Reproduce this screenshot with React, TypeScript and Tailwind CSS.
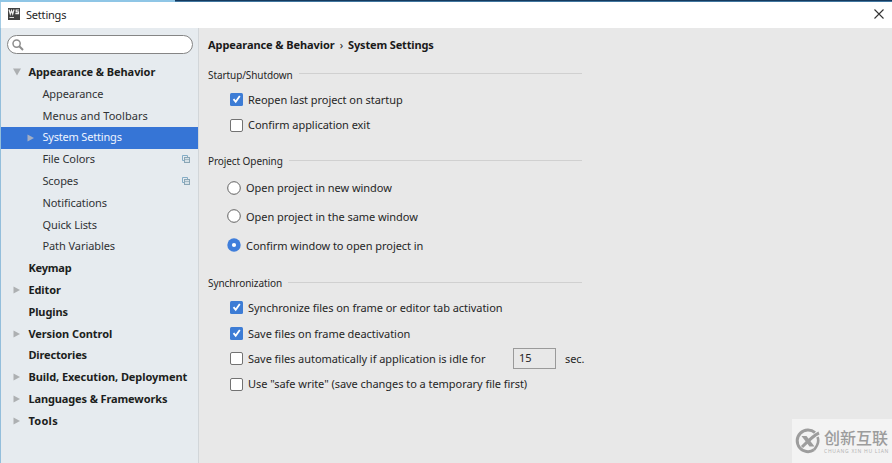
import React from "react";

type TreeItem = {
  label: string;
  level: 0 | 1;
  arrow?: "open" | "closed";
  selected?: boolean;
  shared?: boolean;
  tracking?: string;
};

const tree: TreeItem[] = [
  { label: "Appearance & Behavior", level: 0, arrow: "open" },
  { label: "Appearance", level: 1 },
  { label: "Menus and Toolbars", level: 1, tracking: "tracking-[0.04px]" },
  { label: "System Settings", level: 1, arrow: "closed", selected: true, tracking: "tracking-[-0.18px]" },
  { label: "File Colors", level: 1, shared: true },
  { label: "Scopes", level: 1, shared: true },
  { label: "Notifications", level: 1 },
  { label: "Quick Lists", level: 1 },
  { label: "Path Variables", level: 1 },
  { label: "Keymap", level: 0, tracking: "tracking-[-0.2px]" },
  { label: "Editor", level: 0, arrow: "closed" },
  { label: "Plugins", level: 0 },
  { label: "Version Control", level: 0, arrow: "closed" },
  { label: "Directories", level: 0, tracking: "tracking-[-0.15px]" },
  { label: "Build, Execution, Deployment", level: 0, arrow: "closed" },
  { label: "Languages & Frameworks", level: 0, arrow: "closed", tracking: "tracking-[-0.12px]" },
  { label: "Tools", level: 0, arrow: "closed", tracking: "tracking-[0.3px]" },
];

function Arrow({ kind, selected }: { kind?: "open" | "closed"; selected?: boolean }) {
  return (
    <svg className="mb-[1px] h-[8px] w-[8px] shrink-0" viewBox="0 0 8 8">
      {kind && (
        <path
          d={kind === "open" ? "M0 0.5H8L4 7.5Z" : "M0.5 0.5L7 4L0.5 7.5Z"}
          fill={selected ? "#a3aec4" : "#adb0b2"}
        />
      )}
    </svg>
  );
}

function SharedIcon() {
  return (
    <svg className="h-[8px] w-[8px]" viewBox="0 0 8 8" fill="none" strokeWidth="1">
      <path d="M2 5.5H0.5V0.5H5.5V2" stroke="#84adc6" />
      <rect x="2.5" y="2.5" width="5" height="5" fill="#d6e1e7" stroke="#8aa6b6" />
      <path d="M3 4.5H7" stroke="#a5bac5" />
    </svg>
  );
}

function TreeRow({ item }: { item: TreeItem }) {
  return (
    <div
      className={`flex h-[21.8px] items-center ${item.level ? "pl-[26px]" : "pl-[12px]"} ${
        item.selected ? "bg-[#3675d6] text-[#eef4ff]" : item.level ? "text-[#303234]" : "text-[#1c1e20]"
      }`}
    >
      <Arrow kind={item.arrow} selected={item.selected} />
      <span
        className={`ml-[7.4px] pb-[0.8px] whitespace-nowrap ${item.level ? "" : "font-bold"} ${
          item.tracking ?? "tracking-[-0.07px]"
        }`}
      >
        {item.label}
      </span>
      {item.shared && (
        <span className="mr-[8px] mb-[2px] ml-auto">
          <SharedIcon />
        </span>
      )}
    </div>
  );
}

function Section({ title, children }: { title: string; children: React.ReactNode }) {
  return (
    <section className="w-[374px]">
      <div className="flex h-[16px] items-center">
        <h2 className="text-[10px] tracking-[-0.08px] whitespace-nowrap">{title}</h2>
        <div className="mb-[3px] ml-[6px] h-px flex-1 bg-[#d0d0d0]" />
      </div>
      {children}
    </section>
  );
}

function Check({ checked, label }: { checked?: boolean; label: string }) {
  return (
    <div className="flex h-[25.4px] items-center pl-[22px]">
      <svg className="h-[13px] w-[13px] shrink-0" viewBox="0 0 13 13">
        {checked ? (
          <>
            <rect width="13" height="13" rx="1.5" fill="#3d7cd5" />
            <path d="M3.5 6.2L5.7 8.7L9.8 3" stroke="#fff" strokeWidth="1.8" fill="none" />
          </>
        ) : (
          <rect x="0.5" y="0.5" width="12" height="12" rx="1.5" fill="#fff" stroke="#727272" />
        )}
      </svg>
      <span className="ml-[5px] pt-[1.2px] tracking-[-0.05px] whitespace-nowrap">{label}</span>
    </div>
  );
}

function Radio({ checked, label }: { checked?: boolean; label: string }) {
  return (
    <div className="flex h-[28.8px] items-center pl-[19px]">
      <svg className="h-[14px] w-[14px] shrink-0" viewBox="0 0 14 14">
        {checked ? (
          <>
            <circle cx="7" cy="7" r="6.7" fill="#3f7edb" />
            <circle cx="7" cy="7" r="2.1" fill="#fff" />
          </>
        ) : (
          <circle cx="7" cy="7" r="6.3" fill="#fff" stroke="#626262" />
        )}
      </svg>
      <span className="ml-[5px] pt-[1.2px] tracking-[-0.05px] whitespace-nowrap">{label}</span>
    </div>
  );
}

export default function App() {
  return (
    <div className="relative flex h-[463px] w-[892px] flex-col overflow-hidden bg-[#e8e8e8] font-['Noto_Sans','Noto_Sans_CJK_SC',sans-serif] text-[11px] text-[#262626]">
      <div className="flex h-[2px]">
        <div className="w-[175px] bg-[#8fc6e6]" />
        <div className="flex-1 border-b border-[#41769f] bg-[#15395d]" />
      </div>
      <header className="flex h-[26px] items-center border-l border-[#a3cbe4] bg-white pr-[8px] pl-[7px]">
        <svg className="mb-[2px] h-[12px] w-[12px]" viewBox="0 0 12 12">
          <rect width="12" height="12" fill="#414141" />
          <path
            d="M1 1.5L2.3 6L3.5 2.5L4.7 6L6 1.5M11 2H8.2V3.8H10.5V5.6H7.4"
            stroke="#f0f0f0"
            strokeWidth="1.2"
            fill="none"
          />
          <path d="M1.5 9.5H6" stroke="#ddd" />
        </svg>
        <h1 className="ml-[6px] tracking-[-0.2px]">Settings</h1>
        <svg className="mb-[2px] ml-auto h-[10px] w-[10px]" viewBox="0 0 10 10">
          <path d="M0.5 0.5L9.5 9.5M9.5 0.5L0.5 9.5" stroke="#333" strokeWidth="1.1" />
        </svg>
      </header>
      <div className="flex min-h-0 flex-1">
        <aside className="w-[199px] border-r border-l border-r-[#d2d6d9] border-l-[#93bedb] bg-[#e6ebef]">
          <div className="mt-[7px] ml-[6px] flex h-[19px] w-[186px] items-center rounded-full border border-[#858585] bg-white pl-[4px]">
            <svg className="h-[12px] w-[12px]" viewBox="0 0 12 12" fill="none" stroke="#8d8d8d">
              <circle cx="4.6" cy="4.6" r="3.6" strokeWidth="1.5" />
              <path d="M7.3 7.3L11 11" strokeWidth="2" />
            </svg>
          </div>
          <nav className="mt-[7.8px]">
            {tree.map((item) => (
              <TreeRow key={item.label} item={item} />
            ))}
          </nav>
        </aside>
        <main className="flex-1 pl-[9px]">
          <div className="mt-[9px] flex h-[16px] items-center font-bold text-[#1a1a1a]">
            <span className="tracking-[-0.08px]">Appearance &amp; Behavior</span>
            <span className="mx-[5px] font-normal">›</span>
            <span className="tracking-[-0.15px]">System Settings</span>
          </div>
          <div className="mt-[14px]">
            <Section title="Startup/Shutdown">
              <div className="pt-[4px]">
                <Check checked label="Reopen last project on startup" />
                <Check label="Confirm application exit" />
              </div>
            </Section>
          </div>
          <div className="mt-[16px]">
            <Section title="Project Opening">
              <div className="pt-[3.5px]">
                <Radio label="Open project in new window" />
                <Radio label="Open project in the same window" />
                <Radio checked label="Confirm window to open project in" />
              </div>
            </Section>
          </div>
          <div className="mt-[16px]">
            <Section title="Synchronization">
              <div className="pt-[3.5px]">
                <Check checked label="Synchronize files on frame or editor tab activation" />
                <Check checked label="Save files on frame deactivation" />
                <div className="flex items-center">
                  <div className="w-[305px] shrink-0">
                    <Check label="Save files automatically if application is idle for" />
                  </div>
                  <div className="flex h-[21px] w-[43px] shrink-0 items-center border border-[#9a9a9a] pl-[5px]">
                    15
                  </div>
                  <span className="ml-[9px] pt-[1.2px] tracking-[-0.1px]">sec.</span>
                </div>
                <Check label={'Use "safe write" (save changes to a temporary file first)'} />
              </div>
            </Section>
          </div>
        </main>
      </div>
      <div className="absolute right-0 bottom-0 flex h-[44px] w-[100px] items-center bg-[#f3f3f3] pl-[3px] text-[#9c9c9c]">
        <svg className="h-[26px] w-[26px] shrink-0" viewBox="0 0 26 26" fill="none" stroke="#9d9d9d">
          <path d="M20 4.6A10.8 10.8 0 1 0 19 21.8" strokeWidth="3" />
          <path d="M6.5 8H11.5L19.5 18.5H14.5Z" fill="#9d9d9d" stroke="none" />
          <path d="M24 5C19 7 14 12 7 19" strokeWidth="3" />
          <path d="M22.5 9Q25 14.5 19 21.8" strokeWidth="2.6" />
        </svg>
        <div className="ml-[3px]">
          <div className="h-[20px] text-[16px] leading-[22px] font-medium whitespace-nowrap">创新互联</div>
          <div className="mt-[1px] h-[7px] text-[5px] leading-[7px] tracking-[0.72px] whitespace-nowrap text-[#b5b5b5]">
            CHUANG XIN HU LIAN
          </div>
        </div>
      </div>
    </div>
  );
}
